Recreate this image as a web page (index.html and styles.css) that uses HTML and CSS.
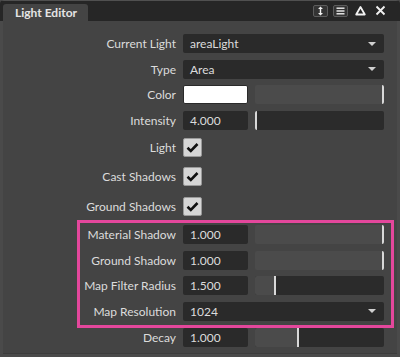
FILE: index.html
```html
<!DOCTYPE html>
<html lang="en">
<head>
  <meta charset="UTF-8">
  <title>Light Editor</title>
  <link rel="stylesheet" href="styles.css">
</head>
<body>

<div class="window">
  <div class="titlebar">
    <div class="tab">Light Editor</div>
    <div class="tools">
      <span class="toolBtn boxed">
        <svg width="13" height="10" viewBox="0 0 13 10">
          <path d="M6.5 0.5 L9 3 L4 3 Z M6.5 9.5 L9 7 L4 7 Z" fill="#f0f0f0"/>
          <rect x="5.8" y="2.5" width="1.4" height="5" fill="#f0f0f0"/>
        </svg>
      </span>
      <span class="toolBtn boxed">
        <svg width="13" height="10" viewBox="0 0 13 10">
          <rect x="2.5" y="1.5" width="8" height="1.4" fill="#f0f0f0"/>
          <rect x="2.5" y="4.3" width="8" height="1.4" fill="#f0f0f0"/>
          <rect x="2.5" y="7.1" width="8" height="1.4" fill="#f0f0f0"/>
        </svg>
      </span>
      <span class="toolBtn">
        <svg width="13" height="12" viewBox="0 0 13 12">
          <path d="M6.5 2 L10.8 9.5 L2.2 9.5 Z" fill="none" stroke="#f0f0f0" stroke-width="1.8" stroke-linejoin="round"/>
        </svg>
      </span>
      <span class="toolBtn">
        <svg width="13" height="12" viewBox="0 0 13 12">
          <path d="M2.5 1.5 L10.5 9.5 M10.5 1.5 L2.5 9.5" stroke="#f0f0f0" stroke-width="1.9"/>
        </svg>
      </span>
    </div>
  </div>

  <div class="panel">
    <div class="row">
      <span class="label">Current Light</span>
      <div class="dropdown"><span>areaLight</span><i class="arrow"></i></div>
    </div>
    <div class="row">
      <span class="label">Type</span>
      <div class="dropdown"><span>Area</span><i class="arrow"></i></div>
    </div>
    <div class="row">
      <span class="label">Color</span>
      <div class="swatch"></div>
      <div class="slider"><div class="fill" style="width: 100%"></div></div>
    </div>
    <div class="row">
      <span class="label">Intensity</span>
      <div class="field">4.000</div>
      <div class="slider"><div class="fill" style="width: 0%"></div></div>
    </div>
    <div class="row check">
      <span class="label">Light</span>
      <div class="checkbox"><svg width="13" height="11" viewBox="0 0 13 11"><path d="M1.5 5.8 L4.8 9 L11.5 2" fill="none" stroke="#111" stroke-width="2.6"/></svg></div>
    </div>
    <div class="row check">
      <span class="label">Cast Shadows</span>
      <div class="checkbox"><svg width="13" height="11" viewBox="0 0 13 11"><path d="M1.5 5.8 L4.8 9 L11.5 2" fill="none" stroke="#111" stroke-width="2.6"/></svg></div>
    </div>
    <div class="row check">
      <span class="label">Ground Shadows</span>
      <div class="checkbox"><svg width="13" height="11" viewBox="0 0 13 11"><path d="M1.5 5.8 L4.8 9 L11.5 2" fill="none" stroke="#111" stroke-width="2.6"/></svg></div>
    </div>
    <div class="row">
      <span class="label">Material Shadow</span>
      <div class="field">1.000</div>
      <div class="slider"><div class="fill" style="width: 100%"></div></div>
    </div>
    <div class="row">
      <span class="label">Ground Shadow</span>
      <div class="field">1.000</div>
      <div class="slider"><div class="fill" style="width: 100%"></div></div>
    </div>
    <div class="row">
      <span class="label">Map Filter Radius</span>
      <div class="field">1.500</div>
      <div class="slider"><div class="fill" style="width: 16%"></div></div>
    </div>
    <div class="row">
      <span class="label">Map Resolution</span>
      <div class="dropdown"><span>1024</span><i class="arrow"></i></div>
    </div>
    <div class="row">
      <span class="label">Decay</span>
      <div class="field">1.000</div>
      <div class="slider"><div class="fill" style="width: 34%"></div></div>
    </div>

    <!-- highlight around the shadow settings -->
    <div class="highlight"></div>
  </div>
</div>

</body>
</html>
```

FILE: styles.css
```css
* {
  box-sizing: border-box;
  margin: 0;
  padding: 0;
}

body {
  width: 400px;
  height: 357px;
  overflow: hidden;
  background-color: #4a4a4a;
  font-family: 'Lato', 'Liberation Sans', sans-serif;
  font-size: 12px;
  color: #dcdcdc;
}

.window {
  height: 357px;
  display: flex;
  flex-direction: column;
  border-radius: 4px 4px 0 0;
  overflow: hidden;
}

.titlebar {
  height: 21px;
  flex: none;
  display: flex;
  align-items: flex-end;
  justify-content: space-between;
  background-color: #262626;
  border-top: 1px solid #505050;
  padding-left: 3px;
}

.tab {
  height: 17px;
  width: 85px;
  background-color: #444444;
  border-radius: 3px 3px 0 0;
  padding-left: 12px;
  line-height: 17px;
  font-weight: bold;
  color: #e4e4e4;
}

.tools {
  display: flex;
  align-self: center;
  gap: 5px;
  padding-right: 12px;
}

.toolBtn {
  width: 15px;
  height: 12px;
  display: flex;
  align-items: center;
  justify-content: center;
}

.boxed {
  background-color: #333333;
  border: 1px solid #5c5c5c;
  border-radius: 2px;
}

.panel {
  position: relative;
  flex: 1;
  background-color: #444444;
  margin: 0 3px 5px 3px;
  padding-top: 13px;
  border-bottom: 1px solid #3c3c3c;
}

.row {
  display: flex;
  align-items: flex-start;
  height: 25.6px;
}

.row.check {
  height: 29.6px;
  padding-top: 1.4px;
}

.label {
  width: 173px;
  height: 19px;
  line-height: 19px;
  text-align: right;
  white-space: nowrap;
  margin-right: 7px;
}

.dropdown {
  width: 201px;
  height: 19px;
  display: flex;
  align-items: center;
  justify-content: space-between;
  background-color: #2a2a2a;
  border-radius: 2px;
  padding: 0 8px 0 7px;
}

.arrow {
  width: 0;
  height: 0;
  border-left: 4px solid transparent;
  border-right: 4px solid transparent;
  border-top: 4px solid #d0d0d0;
}

.field {
  width: 65px;
  height: 19px;
  line-height: 19px;
  background-color: #2a2a2a;
  border-radius: 2px;
  padding-left: 7px;
  margin-right: 7px;
}

.swatch {
  width: 65px;
  height: 19px;
  background-color: #ffffff;
  border: 1px solid #2a2a2a;
  border-radius: 2px;
  margin-right: 7px;
}

.slider {
  width: 129px;
  height: 19px;
  background-color: #2b2b2b;
  border-radius: 2px;
  overflow: hidden;
}

.fill {
  height: 100%;
  background-color: #4b4b4b;
  border-right: 2px solid #d8d8d8;
}

.checkbox {
  width: 19px;
  height: 19px;
  display: flex;
  align-items: center;
  justify-content: center;
  background-color: #d6d6d6;
  border: 1px solid #9a9a9a;
  border-radius: 2px;
}

.highlight {
  position: absolute;
  left: 74px;
  top: 199px;
  width: 317px;
  height: 108px;
  border: 3px solid #e4479c;
}
```
